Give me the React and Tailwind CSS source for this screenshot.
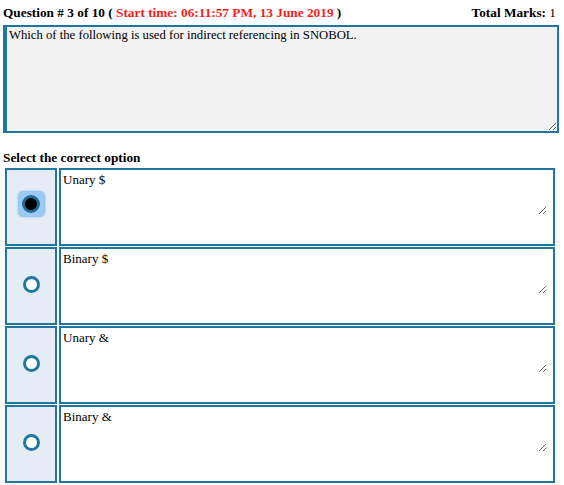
export default function App() {
  const options = ["Unary $", "Binary $", "Unary &", "Binary &"];
  const serif = '"Liberation Serif", "Times New Roman", serif';
  return (
    <div className="w-[564px] h-[485px] bg-white text-black overflow-hidden" style={{ fontFamily: serif }}>
      <div className="flex justify-between items-baseline pl-[3px] pr-[8px] pt-[4px] text-[13.3px] leading-[17px]">
        <div className="font-bold">
          Question # 3 of 10 ( <span className="text-[#ff1a1a]">Start time: 06:11:57 PM, 13 June 2019</span> )
        </div>
        <div>
          <span className="font-bold">Total Marks:</span> 1
        </div>
      </div>
      <div className="pl-[3px] pr-[5px] mt-[4px]">
        <textarea
          readOnly
          className="block w-full h-[108px] bg-[#f2f2f2] border-2 border-l-4 border-[#1f77a0] px-[2px] pt-[1px] text-[12.7px] leading-[15px] outline-none"
          style={{ fontFamily: serif, resize: "both" }}
          defaultValue="Which of the following is used for indirect referencing in SNOBOL."
        />
      </div>
      <div className="pl-[3px] mt-[16px] text-[13.3px] leading-[17px] font-bold">Select the correct option</div>
      <div className="flex flex-col gap-[1px] pl-[5px] pr-[9px] mt-[2px]">
        {options.map((o, i) => (
          <div key={o} className="flex gap-[2px] h-[78px]">
            <div className="w-[52px] shrink-0 bg-[#e5ecf6] border-2 border-[#1f77a0] flex items-center justify-center">
              {i === 0 ? (
                <div className="w-[25px] h-[24px] -mt-[6px] rounded-[4px] bg-[#9ccbf6] flex items-center justify-center shadow-[0_0_2px_1px_#7fb6f0]">
                  <div className="w-[18px] h-[18px] rounded-full bg-black border-[3px] border-[#1f6b94]"></div>
                </div>
              ) : (
                <div className="w-[17px] h-[17px] rounded-full border-[3px] border-[#1f77a0] bg-white -mt-[3px]"></div>
              )}
            </div>
            <div className="flex-1 border-2 border-[#1f77a0] bg-white">
              <textarea
                readOnly
                className="block w-[486px] h-[45px] bg-white px-[2px] pt-[2px] text-[13px] leading-[15px] outline-none"
                style={{ fontFamily: serif, resize: "both" }}
                defaultValue={o}
              />
            </div>
          </div>
        ))}
      </div>
    </div>
  );
}
